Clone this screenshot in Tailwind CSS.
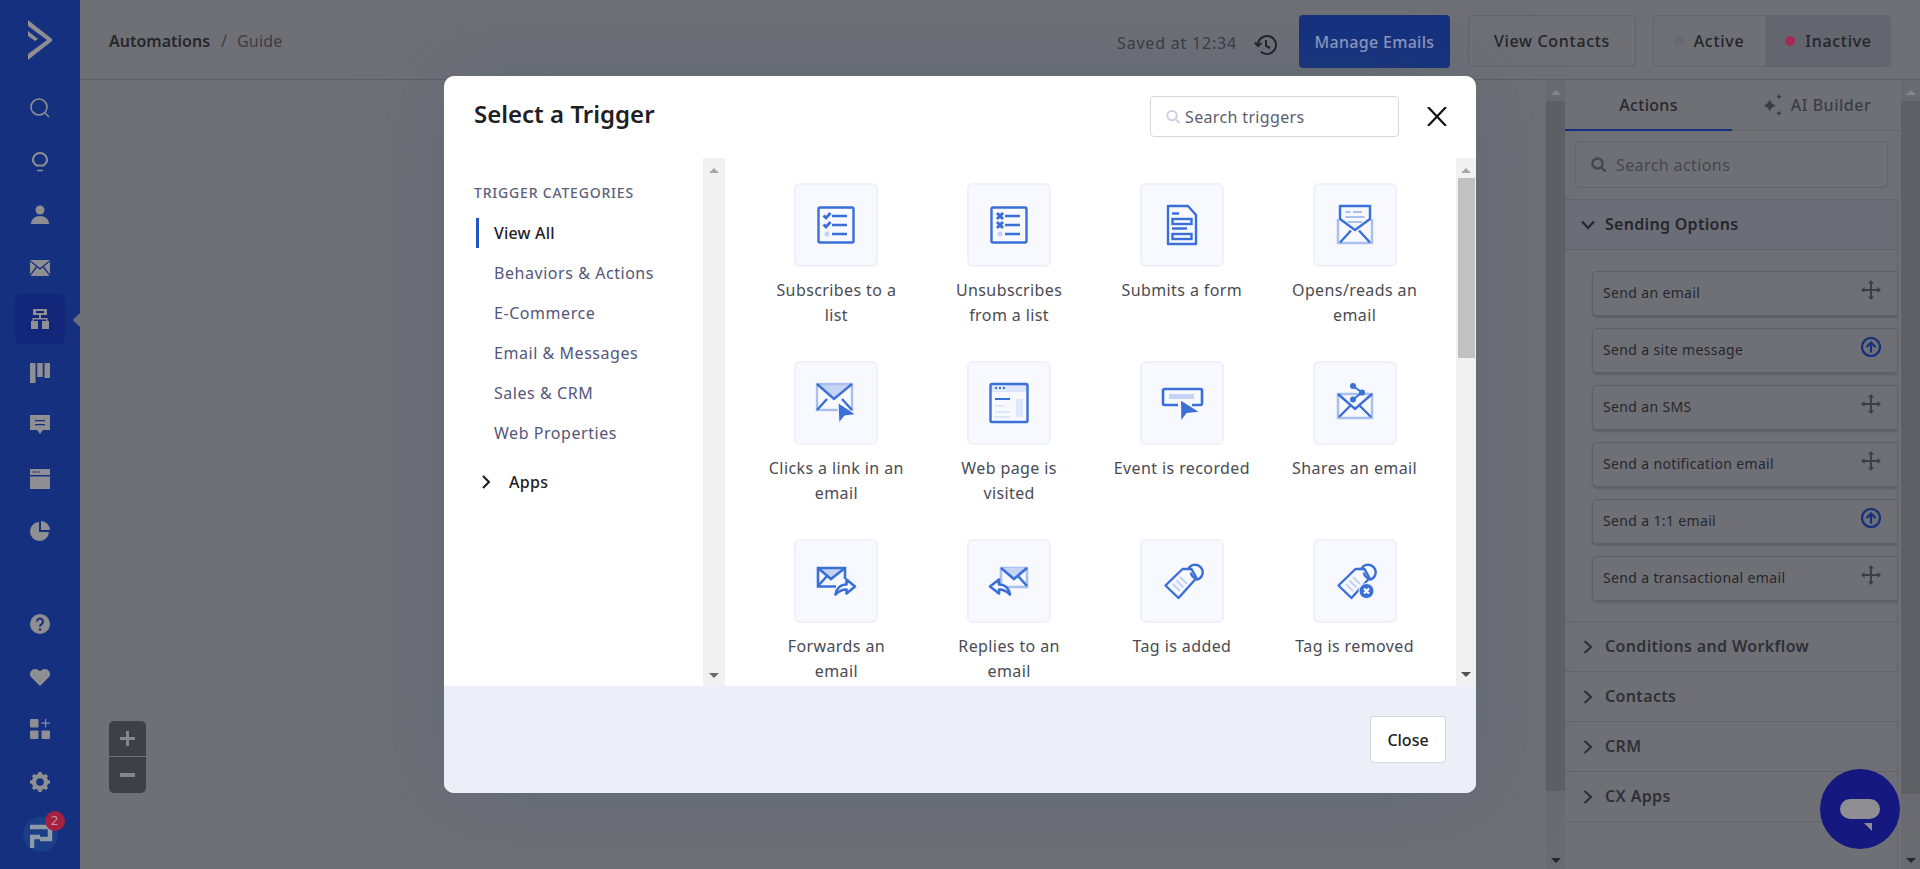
<!DOCTYPE html>
<html lang="en">
<head>
    <meta charset="UTF-8">
    <title>Automations | Guide</title>
    <script src="https://cdn.jsdelivr.net/npm/@tailwindcss/browser@4"></script>
</head>
<body class="font-['Noto_Sans',sans-serif] overflow-hidden">
<div class="relative flex h-[869px] w-[1920px] overflow-hidden bg-[#6f7076]">

    <!-- left nav -->
    <nav class="flex h-full w-[80px] shrink-0 flex-col items-center bg-[#14307f] text-[#8e8e93]">
        <svg class="mt-[20px] h-[40px] w-[26px]" viewBox="0 0 26 40" fill="currentColor"><path d="M1 0 25 19v2L1 40v-6l19-14L1 6z"/><path d="M1 11l10 8-3 2-7-5z"/></svg>
        <div class="mt-[27px] flex h-[42px] w-[50px] items-center justify-center"><svg class="h-[20px] w-[20px]" viewBox="0 0 20 20" fill="none" stroke="currentColor" stroke-width="1.6"><circle cx="9" cy="9" r="8"/><path d="m15 15 4 4"/></svg></div>
        <div class="mt-[12px] flex h-[42px] w-[50px] items-center justify-center"><svg class="h-[20px] w-[20px]" viewBox="0 0 20 20" fill="none" stroke="currentColor" stroke-width="2"><path d="M6.500 13.500C4.500 12 3 10 3 8a7 7 0 0 1 14 0c0 2-1.500 4-3.500 5.500z"/><path d="M7 18.500h6" stroke-width="1.500"/></svg></div>
        <div class="mt-[11px] flex h-[42px] w-[50px] items-center justify-center"><svg class="h-[20px] w-[20px]" viewBox="0 0 20 20" fill="currentColor"><circle cx="10" cy="5" r="4.500"/><path d="M1 19c0-5 4-8 9-8s9 3 9 8z"/></svg></div>
        <div class="mt-[11px] flex h-[42px] w-[50px] items-center justify-center"><svg class="h-[16px] w-[20px]" viewBox="0 0 20 16" fill="currentColor"><path d="M0 0h20L10 8z"/><path d="M0 1.500v13l6-8zM20 1.500v13l-6-8zM7 7.500l3 2.300 3-2.300 6.500 8.500H.5z"/></svg></div>
        <div class="mt-[5px] flex h-[50px] w-[50px] items-center justify-center rounded-md bg-[#12277a]"><svg class="h-[20px] w-[20px]" viewBox="0 0 20 20" fill="currentColor"><path d="M3 0h14v6h-6v3h6.500v3H19v8h-7v-8h4V10.500H4V12h4v8H1v-8h1.500V9H9V6H3zm3 2v2h8V2z"/></svg></div>
        <div class="mt-[8px] flex h-[42px] w-[50px] items-center justify-center"><svg class="h-[20px] w-[20px]" viewBox="0 0 20 20" fill="currentColor"><path d="M0 0h5.500v20H0zM7.200 0h5.500v14H7.200zM14.500 0H20v15h-5.500z"/></svg></div>
        <div class="mt-[10px] flex h-[42px] w-[50px] items-center justify-center"><svg class="h-[20px] w-[20px]" viewBox="0 0 20 20" fill="currentColor"><path fill-rule="evenodd" d="M0 0h20v15h-7l-3 4-3-4H0zm5 5v1.300h10V5zm0 4v1.300h10V9z"/></svg></div>
        <div class="mt-[12px] flex h-[42px] w-[50px] items-center justify-center"><svg class="h-[20px] w-[20px]" viewBox="0 0 20 20" fill="currentColor"><path fill-rule="evenodd" d="M0 0h20v6H0zm3 2.300v1.400h1.400V2.300zm2.600 0v1.400H7V2.300zm2.600 0v1.400h1.400V2.300zM0 7.500h20V20H0z"/></svg></div>
        <div class="mt-[10px] flex h-[42px] w-[50px] items-center justify-center"><svg class="h-[20px] w-[20px]" viewBox="0 0 20 20" fill="currentColor"><path d="M9 1a9.500 9.500 0 1 0 10 10H9z"/><path d="M11 0a9 9 0 0 1 9 9h-9z"/></svg></div>

        <div class="mt-auto flex flex-col items-center">
            <div class="flex h-[42px] w-[50px] items-center justify-center"><svg class="h-[20px] w-[20px]" viewBox="0 0 20 20"><circle cx="10" cy="10" r="10" fill="currentColor"/><path d="M7 7.500a3 3 0 1 1 4.500 2.600c-1 .6-1.500 1-1.500 2.400" fill="none" stroke="#14307f" stroke-width="2"/><circle cx="10" cy="15.500" r="1.200" fill="#14307f"/></svg></div>
            <div class="mt-[11px] flex h-[42px] w-[50px] items-center justify-center"><svg class="h-[20px] w-[20px]" viewBox="0 0 20 20" fill="currentColor"><path d="M10 19 1.500 10.500A5 5 0 0 1 5.500 2c2 0 3.500 1 4.500 2.500C11 3 12.500 2 14.500 2a5 5 0 0 1 4 8.500z"/></svg></div>
            <div class="mt-[10px] flex h-[42px] w-[50px] items-center justify-center"><svg class="h-[20px] w-[20px]" viewBox="0 0 20 20" fill="currentColor"><rect width="8.500" height="8.500" rx="1"/><rect y="11.500" width="8.500" height="8.500" rx="1"/><rect x="11.500" y="11.500" width="8.500" height="8.500" rx="1"/><path d="M15 0h1.200v3.600H20v1.200h-3.800v3.700H15V4.800h-3.600V3.600H15z"/></svg></div>
            <div class="mt-[11px] flex h-[42px] w-[50px] items-center justify-center"><svg class="h-[20px] w-[20px]" viewBox="0 0 20 20"><circle cx="10" cy="10" r="6" fill="none" stroke="currentColor" stroke-width="4.500"/><path d="M10 0v4M10 16v4M0 10h4M16 10h4M3 3l3 3M14 14l3 3M3 17l3-3M14 6l3-3" stroke="currentColor" stroke-width="3.500"/></svg></div>
            <div class="relative mb-[17px] mt-[14px] h-[35px] w-[35px] rounded-full bg-[#1a3f86]">
                <svg class="absolute left-[7px] top-[7px] h-[26px] w-[24px]" viewBox="0 0 24 26" fill="none" stroke="#8e9aa8" stroke-width="4.500"><path d="M0 3h20v12H10M2 24V13h8"/></svg>
                <div class="absolute left-[22px] top-[-6px] flex h-[20px] w-[20px] items-center justify-center rounded-full bg-[#a6213f] text-[13px] text-[#c09aa5]">2</div>
            </div>
        </div>
    </nav>
    <div class="absolute left-[73px] top-[313px] h-0 w-0 border-y-[7px] border-r-[7px] border-y-transparent border-r-[#6f7076]"></div>

    <div class="flex min-w-0 flex-1 flex-col">
        <!-- top bar -->
        <header class="flex h-[80px] shrink-0 items-start border-b border-[#5f6066] pl-[29px]">
            <div class="mt-[29px] flex items-center text-[16px] leading-6">
                <span class="font-semibold text-[#26272c]">Automations</span>
                <span class="ml-[11px] mr-[10px] text-[#3c3d42]">/</span>
                <span class="tracking-[.2px] text-[#3c3d42]">Guide</span>
            </div>
            <div class="ml-auto mr-[29px] flex items-start">
                <span class="mt-[31px] text-[16px] leading-6 tracking-[.8px] text-[#3a3b40]">Saved at 12:34</span>
                <svg class="ml-[17px] mt-[33px] h-[24px] w-[24px] text-[#1f2024]" viewBox="0 0 24 24" fill="none" stroke="currentColor" stroke-width="2"><path d="M4 12a9 9 0 1 1 2.800 6.500"/><path d="M1 9.500 4 13l3.500-3"/><path d="M12 7v6l4 2"/></svg>
                <button class="ml-[21px] mt-[15px] h-[53px] w-[151px] rounded-[4px] bg-[#14307f] text-[16px] font-medium tracking-[.3px] text-[#8d9ac3]">Manage Emails</button>
                <button class="ml-[18px] mt-[15px] h-[52px] w-[168px] rounded-[4px] border border-[#63646a] text-[16px] font-medium tracking-[.7px] text-[#232428]">View Contacts</button>
                <div class="ml-[17px] mt-[15px] flex h-[52px] w-[238px] overflow-hidden rounded-[4px] border border-[#63646a] text-[16px] font-medium tracking-[.7px] text-[#232428]">
                    <div class="flex w-[112px] items-center justify-center gap-[10px] pr-[2px]"><span class="h-[10px] w-[10px] rounded-full bg-[#686970]"></span>Active</div>
                    <div class="flex flex-1 items-center justify-center gap-[10px] border-l border-[#5f6066] bg-[#64666f]"><span class="h-[10px] w-[10px] rounded-full bg-[#a52a54]"></span>Inactive</div>
                </div>
            </div>
        </header>

        <div class="flex min-h-0 flex-1">
            <!-- canvas -->
            <div class="relative min-w-0 flex-1">
                <div class="absolute left-[29px] top-[641px] w-[37px] overflow-hidden rounded-[5px] bg-[#3e3f47] text-[#85868b]">
                    <div class="flex h-[36px] items-center justify-center border-b border-[#73747a]"><svg class="h-[15px] w-[15px]" viewBox="0 0 15 15" fill="currentColor"><path d="M6 0h3v6h6v3H9v6H6V9H0V6h6z"/></svg></div>
                    <div class="flex h-[36px] items-center justify-center"><svg class="h-[4px] w-[15px]" viewBox="0 0 15 4" fill="currentColor"><path d="M0 0h15v4H0z"/></svg></div>
                </div>
            </div>
            <!-- canvas scrollbar -->
            <div class="flex w-[19px] shrink-0 flex-col items-center bg-[#6a6b70]">
                <div class="mt-[10px] h-0 w-0 border-x-[5px] border-b-[5px] border-x-transparent border-b-[#85868b]"></div>
                <div class="mt-[6px] h-[690px] w-full bg-[#5f6066]"></div>
                <div class="mt-auto mb-[6px] h-0 w-0 border-x-[5px] border-t-[5px] border-x-transparent border-t-[#26272c]"></div>
            </div>

            <!-- actions panel -->
            <aside class="flex w-[336px] shrink-0 flex-col">
                <div class="flex h-[51px] shrink-0 border-b border-[#63646a] text-[16px] font-medium">
                    <div class="flex h-[51px] w-[167px] items-center justify-center border-b-[2px] border-[#14307f] tracking-[.3px] text-[#26272c]">Actions</div>
                    <div class="flex flex-1 items-center justify-center gap-[7px] tracking-[.5px] text-[#3a3c46]">
                        <svg class="h-[22px] w-[22px]" viewBox="0 0 20 20" fill="currentColor"><path d="M7 5c1 3 2.500 4.500 5.500 5.500C9.500 11.500 8 13 7 16c-1-3-2.500-4.500-5.500-5.500C4.500 9.500 6 8 7 5zM15.500 0c.5 1.500 1 2 2.500 2.500-1.500.5-2 1-2.500 2.500-.5-1.500-1-2-2.500-2.500 1.500-.5 2-1 2.500-2.500zM15.500 15c.5 1.500 1 2 2.500 2.500-1.500.5-2 1-2.500 2.500-.5-1.500-1-2-2.500-2.500 1.500-.5 2-1 2.500-2.500z"/></svg>
                        AI Builder
                    </div>
                </div>
                <div class="ml-[10px] mr-[13px] mt-[10px] flex h-[47px] shrink-0 items-center rounded-[4px] border border-[#63646a] pl-[15px] text-[16px] tracking-[.4px] text-[#45464e]">
                    <svg class="mr-[10px] h-[15px] w-[15px] text-[#46474e]" viewBox="0 0 15 15" fill="none" stroke="currentColor" stroke-width="2.500"><circle cx="6.500" cy="6.500" r="5"/><path d="m10.500 10.500 4 4"/></svg>
                    Search actions
                </div>
                <div class="mr-[3px] mt-[11px] flex-1 border-r border-[#63646a]">
                    <div class="flex h-[51px] items-center border-y border-[#63646a] bg-[#6b6e76] pb-[2px] pl-[16px] text-[16px] font-semibold tracking-[.3px] text-[#26272c]">
                        <svg class="mr-[10px] mt-[2px] h-[10px] w-[14px]" viewBox="0 0 14 10" fill="none" stroke="currentColor" stroke-width="2.200"><path d="m1 1.500 6 6.500 6-6.500"/></svg>
                        Sending Options
                    </div>
                    <div class="flex flex-col gap-[12px] pb-[20px] pl-[27px] pt-[21px]">
                        <div class="flex h-[45px] items-center justify-between rounded-l-[5px] border border-r-0 border-[#5f6066] pb-[2px] pl-[10px] pr-[16px] text-[14px] tracking-[.35px] text-[#26272c] shadow-[0_2px_2px_rgba(0,0,0,.15)]"><span>Send an email</span><svg class="mb-[6px] h-[20px] w-[20px] text-[#3c3d47]" viewBox="0 0 20 20" fill="currentColor"><path d="M9 3h2v14H9zM3 9h14v2H3zM10 0l3 3.500H7zM10 20l-3-3.500h6zM0 10l3.500-3v6zM20 10l-3.500 3V7z"/></svg></div>
                        <div class="flex h-[45px] items-center justify-between rounded-l-[5px] border border-r-0 border-[#5f6066] pb-[2px] pl-[10px] pr-[16px] text-[14px] tracking-[.35px] text-[#26272c] shadow-[0_2px_2px_rgba(0,0,0,.15)]"><span>Send a site message</span><svg class="mb-[6px] h-[20px] w-[20px] text-[#14307f]" viewBox="0 0 20 20" fill="none" stroke="currentColor" stroke-width="2.200"><circle cx="10" cy="10" r="9"/><path d="M10 15.500V6M5.500 10 10 5.500l4.500 4.500"/></svg></div>
                        <div class="flex h-[45px] items-center justify-between rounded-l-[5px] border border-r-0 border-[#5f6066] pb-[2px] pl-[10px] pr-[16px] text-[14px] tracking-[.35px] text-[#26272c] shadow-[0_2px_2px_rgba(0,0,0,.15)]"><span>Send an SMS</span><svg class="mb-[6px] h-[20px] w-[20px] text-[#3c3d47]" viewBox="0 0 20 20" fill="currentColor"><path d="M9 3h2v14H9zM3 9h14v2H3zM10 0l3 3.500H7zM10 20l-3-3.500h6zM0 10l3.500-3v6zM20 10l-3.500 3V7z"/></svg></div>
                        <div class="flex h-[45px] items-center justify-between rounded-l-[5px] border border-r-0 border-[#5f6066] pb-[2px] pl-[10px] pr-[16px] text-[14px] tracking-[.35px] text-[#26272c] shadow-[0_2px_2px_rgba(0,0,0,.15)]"><span>Send a notification email</span><svg class="mb-[6px] h-[20px] w-[20px] text-[#3c3d47]" viewBox="0 0 20 20" fill="currentColor"><path d="M9 3h2v14H9zM3 9h14v2H3zM10 0l3 3.500H7zM10 20l-3-3.500h6zM0 10l3.500-3v6zM20 10l-3.500 3V7z"/></svg></div>
                        <div class="flex h-[45px] items-center justify-between rounded-l-[5px] border border-r-0 border-[#5f6066] pb-[2px] pl-[10px] pr-[16px] text-[14px] tracking-[.35px] text-[#26272c] shadow-[0_2px_2px_rgba(0,0,0,.15)]"><span>Send a 1:1 email</span><svg class="mb-[6px] h-[20px] w-[20px] text-[#14307f]" viewBox="0 0 20 20" fill="none" stroke="currentColor" stroke-width="2.200"><circle cx="10" cy="10" r="9"/><path d="M10 15.500V6M5.500 10 10 5.500l4.500 4.500"/></svg></div>
                        <div class="flex h-[45px] items-center justify-between rounded-l-[5px] border border-r-0 border-[#5f6066] pb-[2px] pl-[10px] pr-[16px] text-[14px] tracking-[.35px] text-[#26272c] shadow-[0_2px_2px_rgba(0,0,0,.15)]"><span>Send a transactional email</span><svg class="mb-[6px] h-[20px] w-[20px] text-[#3c3d47]" viewBox="0 0 20 20" fill="currentColor"><path d="M9 3h2v14H9zM3 9h14v2H3zM10 0l3 3.500H7zM10 20l-3-3.500h6zM0 10l3.500-3v6zM20 10l-3.500 3V7z"/></svg></div>
                    </div>
                    <div class="flex h-[50px] items-center border-t border-[#63646a] pb-[2px] pl-[18px] text-[16px] font-semibold tracking-[.35px] text-[#2f3036]"><svg class="mr-[12px] mt-[2px] h-[14px] w-[10px]" viewBox="0 0 10 14" fill="none" stroke="currentColor" stroke-width="2.200"><path d="m1.500 1 6.500 6-6.500 6"/></svg>Conditions and Workflow</div>
                    <div class="flex h-[50px] items-center border-t border-[#63646a] pb-[2px] pl-[18px] text-[16px] font-semibold tracking-[.35px] text-[#2f3036]"><svg class="mr-[12px] mt-[2px] h-[14px] w-[10px]" viewBox="0 0 10 14" fill="none" stroke="currentColor" stroke-width="2.200"><path d="m1.500 1 6.500 6-6.500 6"/></svg>Contacts</div>
                    <div class="flex h-[50px] items-center border-t border-[#63646a] pb-[2px] pl-[18px] text-[16px] font-semibold tracking-[.35px] text-[#2f3036]"><svg class="mr-[12px] mt-[2px] h-[14px] w-[10px]" viewBox="0 0 10 14" fill="none" stroke="currentColor" stroke-width="2.200"><path d="m1.500 1 6.500 6-6.500 6"/></svg>CRM</div>
                    <div class="flex h-[51px] items-center border-y border-[#63646a] pb-[2px] pl-[18px] text-[16px] font-semibold tracking-[.35px] text-[#2f3036]"><svg class="mr-[12px] mt-[2px] h-[14px] w-[10px]" viewBox="0 0 10 14" fill="none" stroke="currentColor" stroke-width="2.200"><path d="m1.500 1 6.500 6-6.500 6"/></svg>CX Apps</div>
                </div>
            </aside>
            <!-- panel scrollbar -->
            <div class="flex w-[19px] shrink-0 flex-col items-center bg-[#6a6b70]">
                <div class="mt-[10px] h-0 w-0 border-x-[5px] border-b-[5px] border-x-transparent border-b-[#85868b]"></div>
                <div class="mt-[6px] h-[693px] w-full bg-[#5f6066]"></div>
                <div class="mt-auto mb-[6px] h-0 w-0 border-x-[5px] border-t-[5px] border-x-transparent border-t-[#26272c]"></div>
            </div>
        </div>
    </div>

    <!-- chat launcher -->
    <div class="absolute left-[1820px] top-[769px] flex h-[80px] w-[80px] items-center justify-center rounded-full bg-[#14187f]">
        <div class="relative h-[20px] w-[40px] rounded-[10px] bg-[#8e8e93]">
            <div class="absolute left-[24px] top-[24px] h-0 w-0 border-l-[8px] border-t-[8px] border-l-transparent border-t-[#8e8e93]"></div>
        </div>
    </div>

    <!-- modal -->
    <div class="absolute left-[444px] top-[76px] flex h-[717px] w-[1032px] flex-col overflow-hidden rounded-[10px] bg-white shadow-[0_0_90px_rgba(70,90,110,.35)]">
        <div class="flex h-[82px] shrink-0 items-start pl-[30px]">
            <h2 class="mt-[20px] text-[24px] font-semibold leading-9 text-[#1f2024]">Select a Trigger</h2>
            <div class="ml-auto mt-[20px] flex h-[41px] w-[249px] items-center rounded-[4px] border border-[#d5d7e0] pl-[15px] text-[16px] tracking-[.35px] text-[#5c5e6e]">
                <svg class="mr-[5px] h-[15px] w-[14px] text-[#c9cce0]" viewBox="0 0 15 15" fill="none" stroke="currentColor" stroke-width="2"><circle cx="6.500" cy="6.500" r="5"/><path d="m10.500 10.500 4 4"/></svg>
                Search triggers
            </div>
            <svg class="ml-[28px] mr-[29px] mt-[31px] h-[19px] w-[20px] text-[#111]" viewBox="0 0 20 19" fill="none" stroke="currentColor" stroke-width="2.200"><path d="m1 0 18 19M19 0 1 19"/></svg>
        </div>

        <div class="flex min-h-0 flex-1">
            <!-- categories -->
            <div class="flex w-[259px] shrink-0 flex-col pl-[30px]">
                <div class="mt-[28px] text-[14px] font-medium leading-[14px] tracking-[.8px] text-[#5c5f7a]">TRIGGER CATEGORIES</div>
                <ul class="mt-[18px] text-[16px] tracking-[.55px] text-[#54567a]">
                    <li class="ml-[2px] flex h-[30px] items-center border-l-[3px] border-[#2255cc] pl-[15px] font-medium tracking-[.2px] text-[#1f2024]">View All</li>
                    <li class="mt-[10px] flex h-[30px] items-center pl-[20px]">Behaviors &amp; Actions</li>
                    <li class="mt-[10px] flex h-[30px] items-center pl-[20px]">E-Commerce</li>
                    <li class="mt-[10px] flex h-[30px] items-center pl-[20px]">Email &amp; Messages</li>
                    <li class="mt-[10px] flex h-[30px] items-center pl-[20px]">Sales &amp; CRM</li>
                    <li class="mt-[10px] flex h-[30px] items-center pl-[20px]">Web Properties</li>
                </ul>
                <div class="mt-[19px] flex h-[30px] items-center pl-[8px] text-[16px] font-medium tracking-[.3px] text-[#1f2024]"><svg class="mr-[19px] h-[14px] w-[8px]" viewBox="0 0 8 14" fill="none" stroke="currentColor" stroke-width="2.200"><path d="m1 1 6 6-6 6"/></svg>Apps</div>
            </div>
            <div class="flex w-[22px] shrink-0 flex-col items-center bg-[#f1f1f1]">
                <div class="mt-[10px] h-0 w-0 border-x-[5px] border-b-[5px] border-x-transparent border-b-[#a6a6a6]"></div>
                <div class="mt-auto mb-[8px] h-0 w-0 border-x-[5px] border-t-[5px] border-x-transparent border-t-[#6b6b6b]"></div>
            </div>

            <!-- trigger grid -->
            <div class="min-w-0 flex-1 overflow-hidden pl-[25px] pt-[25px]">
                <div class="grid w-[691px] grid-cols-4 gap-y-[33px] text-center text-[16px] leading-[25px] tracking-[.4px] text-[#4a4b53]">

                    <div class="flex flex-col items-center">
                        <div class="mb-[11px] flex h-[84px] w-[84px] items-center justify-center rounded-[6px] border-2 border-[#eff1f7] bg-[#f7f9fe]">
                            <svg class="h-[44px] w-[44px]" viewBox="0 0 44 44" fill="none" stroke="#3a6fd8" stroke-width="2.400"><rect x="4.500" y="4.500" width="35" height="35" rx="1.500"/><path d="M18 13h15M18 22h15M18 31h15"/><path d="m9.500 12.500 2.500 2.500 4.500-5M9.500 21.500l2.500 2.500 4.500-5" stroke-width="2.800"/><circle cx="13" cy="31" r="2.500" fill="#c5d4f5" stroke="none"/></svg>
                        </div>
                        Subscribes to a<br>list
                    </div>
                    <div class="flex flex-col items-center">
                        <div class="mb-[11px] flex h-[84px] w-[84px] items-center justify-center rounded-[6px] border-2 border-[#eff1f7] bg-[#f7f9fe]">
                            <svg class="h-[44px] w-[44px]" viewBox="0 0 44 44" fill="none" stroke="#3a6fd8" stroke-width="2.400"><rect x="4.500" y="4.500" width="35" height="35" rx="1.500"/><path d="M18 13h15M18 22h15M18 31h15"/><path d="m10 10 6 6m0-6-6 6M10 19l6 6m0-6-6 6" stroke-width="3"/><circle cx="13" cy="31" r="2.500" fill="#c5d4f5" stroke="none"/></svg>
                        </div>
                        Unsubscribes<br>from a list
                    </div>
                    <div class="flex flex-col items-center">
                        <div class="mb-[11px] flex h-[84px] w-[84px] items-center justify-center rounded-[6px] border-2 border-[#eff1f7] bg-[#f7f9fe]">
                            <svg class="h-[44px] w-[44px]" viewBox="0 0 44 44" fill="none" stroke="#3a6fd8" stroke-width="2.400"><path d="M8 3h20l8 9v29H8z" stroke-linejoin="round"/><path d="M12 10.500h7M12 25.500h15"/><rect x="12.500" y="16" width="19" height="5"/><rect x="12.500" y="31" width="19" height="5"/></svg>
                        </div>
                        Submits a form
                    </div>
                    <div class="flex flex-col items-center">
                        <div class="mb-[11px] flex h-[84px] w-[84px] items-center justify-center rounded-[6px] border-2 border-[#eff1f7] bg-[#f7f9fe]">
                            <svg class="h-[44px] w-[44px]" viewBox="0 0 44 44" fill="none" stroke="#3a6fd8" stroke-width="2.400"><path d="M5 16v24h34V16" stroke="#a9c0ef" stroke-width="2.500"/><path d="M7 3h30v13L22 27 7 16z" stroke-linejoin="round"/><path d="M7 39.500 18 27.500M37 39.500 26 27.500"/><path d="M12.500 9h5M20 9h9M12.500 14h19M15 19h14" stroke="#a9c0ef" stroke-width="2"/></svg>
                        </div>
                        Opens/reads an<br>email
                    </div>

                    <div class="flex flex-col items-center">
                        <div class="mb-[11px] flex h-[84px] w-[84px] items-center justify-center rounded-[6px] border-2 border-[#eff1f7] bg-[#f7f9fe]">
                            <svg class="h-[44px] w-[44px]" viewBox="0 0 44 44" fill="none" stroke="#3a6fd8" stroke-width="2.400"><path d="M3 3h35L20 18z" fill="#c5d4f5" stroke="none"/><rect x="3" y="3" width="35" height="26" stroke="#a9c0ef"/><path d="M3 3l17 15L38 3M3 29l10-11M38 29 28 18"/><path d="M24 21.700 42 33.500 30.500 35 25 42z" fill="#3a6fd8" stroke="#f7f9fe" stroke-width="1"/></svg>
                        </div>
                        Clicks a link in an<br>email
                    </div>
                    <div class="flex flex-col items-center">
                        <div class="mb-[11px] flex h-[84px] w-[84px] items-center justify-center rounded-[6px] border-2 border-[#eff1f7] bg-[#f7f9fe]">
                            <svg class="h-[44px] w-[44px]" viewBox="0 0 44 44" fill="none" stroke="#3a6fd8" stroke-width="2.400"><path d="M4 4h36v7H4z" fill="#dde6fa" stroke="none"/><rect x="3.500" y="3" width="37" height="38" rx="1.500"/><path d="M8 7h2M12 7h2M16 7h2" stroke-width="2"/><path d="M8 18h15" stroke-width="2"/><path d="M8 25h9M8 31h15M8 36h15" stroke="#dde6fa" stroke-width="2"/><rect x="29" y="18" width="7" height="18" fill="#dde6fa" stroke="none"/></svg>
                        </div>
                        Web page is<br>visited
                    </div>
                    <div class="flex flex-col items-center">
                        <div class="mb-[11px] flex h-[84px] w-[84px] items-center justify-center rounded-[6px] border-2 border-[#eff1f7] bg-[#f7f9fe]">
                            <svg class="h-[44px] w-[44px]" viewBox="0 0 44 44" fill="none" stroke="#3a6fd8" stroke-width="2.600"><path d="M18 24H4.500a1.500 1.500 0 0 1-1.500-1.500v-13A1.500 1.500 0 0 1 4.500 8h36A1.500 1.500 0 0 1 42 9.500v13a1.500 1.500 0 0 1-1.500 1.500H32" stroke-linejoin="round"/><path d="M9 13h25v5H9z" fill="#c5d4f5" stroke="none"/><path d="M21 19.700 38.500 30.700 26.500 32 21.300 39z" fill="#3a6fd8" stroke="none"/></svg>
                        </div>
                        Event is recorded
                    </div>
                    <div class="flex flex-col items-center">
                        <div class="mb-[11px] flex h-[84px] w-[84px] items-center justify-center rounded-[6px] border-2 border-[#eff1f7] bg-[#f7f9fe]">
                            <svg class="h-[44px] w-[44px]" viewBox="0 0 44 44" fill="none" stroke="#3a6fd8" stroke-width="2.400"><rect x="5" y="13" width="34" height="24" stroke="#a9c0ef" stroke-width="2.500"/><path d="M5 13l17 15 17-15M6 36l11-11M38 36 27 25"/><path d="M20 5l9 6.500-9 7" stroke-width="2"/><circle cx="20" cy="5" r="3" fill="#3a6fd8" stroke="none"/><circle cx="29" cy="11.500" r="3" fill="#3a6fd8" stroke="none"/><circle cx="20" cy="18.500" r="3" fill="#3a6fd8" stroke="none"/></svg>
                        </div>
                        Shares an email
                    </div>

                    <div class="flex flex-col items-center">
                        <div class="mb-[11px] flex h-[84px] w-[84px] items-center justify-center rounded-[6px] border-2 border-[#eff1f7] bg-[#f7f9fe]">
                            <svg class="h-[44px] w-[44px]" viewBox="0 0 44 44" fill="none" stroke="#3a6fd8" stroke-width="2.600"><path d="M4 9h27L17 20z" fill="#c5d4f5" stroke="none"/><path d="M22 27.500H4V9h27v11"/><path d="m4 9 13 11L31 9M4 27l9-10"/><path d="M21.500 35.500c1-6 5-10 11-10v-5l8.500 7-8.500 7v-4c-4 0-8 2-11 5z" fill="#f7f9fe" stroke-linejoin="round"/></svg>
                        </div>
                        Forwards an<br>email
                    </div>
                    <div class="flex flex-col items-center">
                        <div class="mb-[11px] flex h-[84px] w-[84px] items-center justify-center rounded-[6px] border-2 border-[#eff1f7] bg-[#f7f9fe]">
                            <svg class="h-[44px] w-[44px]" viewBox="0 0 44 44" fill="none" stroke="#3a6fd8" stroke-width="2.600"><path d="M14 9h26v19H14z" fill="#f7f9fe" stroke="#a9c0ef"/><path d="M14 9h26L27 20z" fill="#c5d4f5" stroke="none"/><path d="m14 9 13 11L40 9M40 27 31 17"/><path d="M23 35.500c-1-6-5-10-11-10v-5l-9 7 9 7v-4c4 0 8 2 11 5z" fill="#f7f9fe" stroke-linejoin="round"/></svg>
                        </div>
                        Replies to an<br>email
                    </div>
                    <div class="flex flex-col items-center">
                        <div class="mb-[11px] flex h-[84px] w-[84px] items-center justify-center rounded-[6px] border-2 border-[#eff1f7] bg-[#f7f9fe]">
                            <svg class="h-[44px] w-[44px]" viewBox="0 0 44 44" fill="none" stroke="#3a6fd8" stroke-width="2.400"><path d="M5.500 26.500 22.500 10h9l5 9-18 20z" stroke-linejoin="round"/><path d="m13 25 7 7M16.500 21.500l7 7M20 18l7 7" stroke="#c5d4f5" stroke-width="2.400"/><path d="M28 11a7.500 7.500 0 1 1 9 9.500c-2-1-6-3-6-7"/></svg>
                        </div>
                        Tag is added
                    </div>
                    <div class="flex flex-col items-center">
                        <div class="mb-[11px] flex h-[84px] w-[84px] items-center justify-center rounded-[6px] border-2 border-[#eff1f7] bg-[#f7f9fe]">
                            <svg class="h-[44px] w-[44px]" viewBox="0 0 44 44" fill="none" stroke="#3a6fd8" stroke-width="2.400"><path d="M5.500 26.500 22.500 10h9l5 9-18 20z" stroke-linejoin="round"/><path d="m13 25 7 7M16.500 21.500l7 7M20 18l7 7" stroke="#c5d4f5" stroke-width="2.400"/><path d="M28 11a7.500 7.500 0 1 1 9 9.500c-2-1-6-3-6-7"/><circle cx="33.500" cy="32" r="7.500" fill="#3a6fd8" stroke="#f7f9fe" stroke-width="1"/><path d="m31 29.500 5 5m0-5-5 5" stroke="#fff" stroke-width="2.200"/></svg>
                        </div>
                        Tag is removed
                    </div>
                </div>
            </div>
            <div class="flex w-[20px] shrink-0 flex-col items-center bg-[#f1f1f1]">
                <div class="mt-[10px] h-0 w-0 border-x-[5px] border-b-[5px] border-x-transparent border-b-[#a6a6a6]"></div>
                <div class="mt-[5px] h-[180px] w-[17px] bg-[#c1c1c1]"></div>
                <div class="mt-auto mb-[9px] h-0 w-0 border-x-[5px] border-t-[5px] border-x-transparent border-t-[#505050]"></div>
            </div>
        </div>

        <div class="flex h-[107px] shrink-0 items-start justify-end bg-[#eceff8] pr-[30px] pt-[30px]">
            <button class="h-[47px] w-[76px] rounded-[4px] border border-[#d5d7e0] bg-white text-[16px] font-medium text-[#1f2024]">Close</button>
        </div>
    </div>
</div>
</body>
</html>
